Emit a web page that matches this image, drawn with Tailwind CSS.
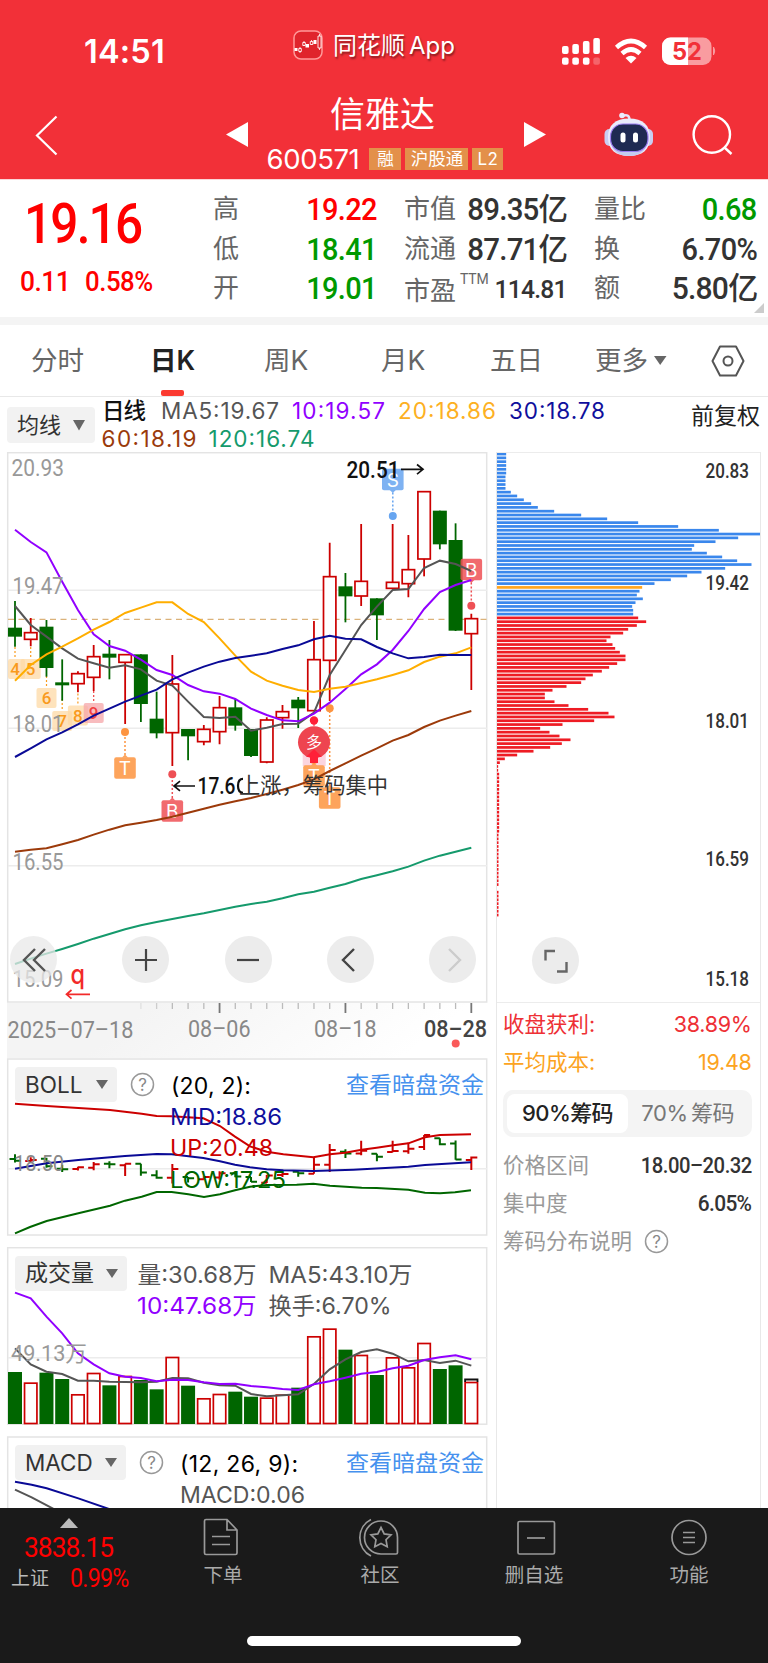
<!DOCTYPE html>
<html lang="zh-CN">
<head>
    <meta charset="UTF-8">
    <meta name="viewport" content="width=device-width, initial-scale=1.0">
    <title>信雅达 600571</title>
    <script src="https://cdn.jsdelivr.net/npm/@tailwindcss/browser@4"></script>
</head>
<body class="w-[768px] h-[1663px] overflow-hidden bg-white text-[#333] font-[Inter,'Noto_Sans_CJK_SC',sans-serif] flex flex-col">

    <!-- Header -->
    <header class="h-[179px] shrink-0 bg-[#f23038] text-white flex flex-col">
        <div class="h-[92px] flex">
            <div class="w-[293px] pl-[84px] pt-[31px] text-[32.500px] leading-[41px] font-semibold tracking-[0.2px]">14:51</div>
            <div class="w-[269px] pt-[30px] flex items-start">
                <svg width="30" height="30" viewBox="0 0 30 30">
                    <rect x="1" y="1" width="28" height="28" rx="7" fill="#e0242c" stroke="#f99" stroke-width="1.5"/>
                    <path d="M1.500 18h3v3h-3zM12.500 14h3.500v3.500h-3.500zM20.500 10h3v4h-3z" fill="#fff"/>
                    <path d="M7 17v6M11 11v5M18.500 10v5M26.500 4v16" stroke="#fff" stroke-width=".8"/>
                    <path d="M5.800 18.500h2.500v3H5.800zM9.800 12.500h2.500v3H9.800zM17.300 11.500h2.500v3h-2.500zM25 6h3v12h-3z" fill="#e0242c" stroke="#fff" stroke-width=".9"/>
                </svg>
                <span class="ml-[10px] text-[24px] leading-[31px] whitespace-nowrap [text-shadow:1px_2px_2px_rgba(0,0,0,0.45)]">同花顺<span class="ml-[4px]">App</span></span>
            </div>
            <svg class="mt-[36px]" width="160" height="32" viewBox="562 36 160 32">
                <g fill="#fff">
                    <rect x="562" y="46" width="6.600" height="8" rx="2"/>
                    <rect x="572.300" y="44" width="6.600" height="10" rx="2"/>
                    <rect x="582.900" y="41" width="6.600" height="13" rx="2"/>
                    <rect x="593.300" y="38" width="6.600" height="16" rx="2"/>
                    <rect x="562" y="57.500" width="6.600" height="7.200" rx="2"/>
                    <rect x="572.300" y="57.500" width="6.600" height="7.200" rx="2"/>
                    <rect x="582.900" y="57.500" width="6.600" height="7.200" rx="2"/>
                    <rect x="593.300" y="57.500" width="6.600" height="7.200" rx="2" opacity=".25"/>
                </g>
                <g fill="none" stroke="#fff" stroke-width="4.600">
                    <path d="M616.500 47.500Q631 34.500 645.500 47.500"/>
                    <path d="M622 53.500Q631 45.500 640 53.500"/>
                </g>
                <path d="M625.500 58Q631 53.500 636.500 58L631 63.500z" fill="#fff"/>
                <rect x="662" y="37.500" width="49.500" height="27.500" rx="8.500" fill="#f99ca0"/>
                <path d="M670.500 37.500H688V65H670.500A8.500 8.500 0 0 1 662 56.500V46A8.500 8.500 0 0 1 670.500 37.500z" fill="#fff"/>
                <path d="M713.500 47q2.500 4 0 8z" fill="#f99ca0" stroke="#f99ca0"/>
                <text x="672" y="60" font-size="24" font-weight="700" fill="#f23038" textLength="30" lengthAdjust="spacingAndGlyphs">52</text>
            </svg>
        </div>
        <div class="h-[87px] flex">
            <div class="w-[226px] pl-[35px] pt-[23px]">
                <svg width="24" height="41" viewBox="0 0 24 41"><path d="M21.500 1.500L2 20.500l19.500 19" fill="none" stroke="#fff" stroke-width="2.200"/></svg>
            </div>
            <svg class="mt-[30px]" width="22" height="26"><path d="M22 0v25L0 12.500z" fill="#fff"/></svg>
            <div class="w-[276px] flex flex-col items-center">
                <div class="h-[52px] leading-[45px] text-[35px] -ml-[7px]">信雅达</div>
                <div class="flex items-center gap-[4px] h-[22px] mt-[4px] ml-[-2px]">
                    <span class="text-[27.500px] leading-[22px] tracking-[-0.4px] mr-[6px]">600571</span>
                    <span class="w-[32px] h-[22px] bg-[#e3904a] text-[16.500px] leading-[22px] text-center">融</span>
                    <span class="w-[63px] h-[22px] bg-[#e3904a] text-[17.500px] leading-[22px] text-center">沪股通</span>
                    <span class="w-[31px] h-[22px] bg-[#e3904a] text-[17px] leading-[22px] text-center tracking-[0.5px]">L2</span>
                </div>
            </div>
            <svg class="mt-[30px]" width="23" height="26"><path d="M0 0v25l22-12.500z" fill="#fff"/></svg>
            <svg class="ml-[56px] mt-[19px]" width="52" height="48" viewBox="602 111 52 48">
                <path d="M621 116q8-3 7.500 5" fill="none" stroke="#e6e3f8" stroke-width="2.500"/>
                <circle cx="621" cy="115.500" r="2.800" fill="#eceafc"/>
                <rect x="603.500" y="129" width="10" height="17" rx="5" fill="#c9cdf2"/>
                <rect x="642" y="129" width="10" height="17" rx="5" fill="#c9cdf2"/>
                <path d="M628 118.500c14 0 21 7 21 18.500 0 13-8 19-21 19s-21-6-21-19c0-11.500 7-18.500 21-18.500z" fill="#e9ebfb"/>
                <path d="M611 147c3 6 9 9 17 9s14-3 17-9" fill="#c5cbef"/>
                <rect x="609.500" y="124" width="37.500" height="27.500" rx="12.500" fill="#1f2a52" stroke="#9b7cf0" stroke-width="1.200"/>
                <rect x="619.500" y="132.500" width="5" height="10" rx="2.500" fill="#fff"/>
                <rect x="632" y="132.500" width="5" height="10" rx="2.500" fill="#fff"/>
            </svg>
            <svg class="ml-[35px] mt-[20px]" width="46" height="46" viewBox="690 112 46 46"><g fill="none" stroke="#fff" stroke-width="2.400"><circle cx="711.800" cy="134.500" r="18.200"/><path d="M724 147l7.500 7"/></g></svg>
        </div>
    </header>

    <!-- Quote summary -->
    <section class="h-[138px] shrink-0 relative flex pt-[10px] font-[Roboto,'Noto_Sans_CJK_SC',sans-serif] border-t border-[#fbd5d7]">
        <div class="w-[213px] text-[#ff0000] font-medium">
            <div class="pl-[24px] h-[74px]"><span class="inline-block origin-left scale-x-[0.9] text-[55px] leading-[69px] tracking-[-2px]">19.16</span></div>
            <div class="pl-[20px] flex text-[28px] leading-[35px] tracking-[-0.500px]"><span class="w-[65px] origin-left scale-x-[0.94]">0.11</span><span class="origin-left scale-x-[0.92]">0.58%</span></div>
        </div>
        <div class="flex gap-[27px] text-[26px] leading-[39.500px] text-[#666]">
            <div class="w-[164px]">
                <div class="flex justify-between"><span>高</span><b class="origin-right scale-x-[0.92] text-[31.500px] font-medium tracking-[-0.700px] text-[#ff0000]">19.22</b></div>
                <div class="flex justify-between"><span>低</span><b class="origin-right scale-x-[0.92] text-[31.500px] font-medium tracking-[-0.700px] text-[#009900]">18.41</b></div>
                <div class="flex justify-between"><span>开</span><b class="origin-right scale-x-[0.92] text-[31.500px] font-medium tracking-[-0.700px] text-[#009900]">19.01</b></div>
            </div>
            <div class="w-[163px] whitespace-nowrap">
                <div class="flex justify-between"><span>市值</span><b class="origin-right scale-x-[0.95] text-[31px] font-medium tracking-[-0.800px] text-[#333]">89.35亿</b></div>
                <div class="flex justify-between"><span>流通</span><b class="origin-right scale-x-[0.95] text-[31px] font-medium tracking-[-0.800px] text-[#333]">87.71亿</b></div>
                <div class="flex justify-between"><span class="flex pt-[3px]">市盈<i class="not-italic text-[14px] leading-[14px] ml-[4px] tracking-[-0.200px]">TTM</i></span><b class="origin-right scale-x-[0.93] text-[26.500px] font-medium tracking-[-0.800px] text-[#333]">114.81</b></div>
            </div>
            <div class="w-[163px] whitespace-nowrap">
                <div class="flex justify-between"><span>量比</span><b class="origin-right scale-x-[0.92] text-[31.500px] font-medium tracking-[-0.700px] text-[#009900]">0.68</b></div>
                <div class="flex justify-between"><span>换</span><b class="origin-right scale-x-[0.92] text-[31.500px] font-medium tracking-[-0.700px] text-[#333]">6.70%</b></div>
                <div class="flex justify-between"><span>额</span><b class="origin-right scale-x-[0.97] text-[31px] font-medium tracking-[-0.800px] text-[#333]">5.80亿</b></div>
            </div>
        </div>
        <svg class="absolute right-[4px] bottom-[4px]" width="10" height="10"><path d="M10 0v10H0z" fill="#ccc"/></svg>
    </section>

    <!-- Period tabs -->
    <nav class="h-[79px] shrink-0 border-t-8 border-[#f4f4f4] flex items-center text-[26.500px] text-[#666] relative whitespace-nowrap">
        <span class="w-[120px] pl-[31px]">分时</span>
        <span class="w-[114px] pl-[30px] font-semibold text-[#222]">日K</span>
        <span class="w-[117px] pl-[30px]">周K</span>
        <span class="w-[117px] pl-[30px]">月K</span>
        <span class="w-[117px] pl-[22px]">五日</span>
        <span class="w-[126px] pl-[10px] flex items-center gap-[6px]">更多<svg width="13" height="10"><path d="M0 0h12.500L6.200 9z" fill="#666"/></svg></span>
        <svg width="34" height="32" viewBox="0 0 34 32"><g fill="none" stroke="#555" stroke-width="2"><path d="M9 1.500h16L32.500 16 25 30.500H9L1.500 16z" stroke-linejoin="round"/><circle cx="17" cy="16" r="4.500"/></g></svg>
        <i class="absolute left-[161px] bottom-0 w-[23px] h-[6px] rounded-[2px] bg-[#fb3a30]"></i>
    </nav>

    <!-- Moving averages -->
    <section class="h-[56px] shrink-0 border-t border-[#e8e8e8] flex text-[22px]">
        <div class="ml-[7px] mt-[10px] w-[88px] h-[36px] rounded-[4px] bg-[#f2f2f2] flex items-center justify-between pl-[10px] pr-[10px]">均线<svg width="12" height="11"><path d="M0 0h12L6 10.500z" fill="#666"/></svg></div>
        <svg class="ml-[5px]" width="520" height="55" viewBox="100 397 520 55">
            <g font-size="22.500" lengthAdjust="spacingAndGlyphs">
                <text x="102" y="419" fill="#111" font-weight="500" textLength="44">日线</text>
                <text x="161" y="418.500" fill="#555" textLength="118">MA5:19.67</text>
                <text x="292" y="418.500" fill="#9100ff" textLength="93">10:19.57</text>
                <text x="398" y="418.500" fill="#fdb022" textLength="98">20:18.86</text>
                <text x="509" y="418.500" fill="#0f0f9c" textLength="96">30:18.78</text>
                <text x="101.500" y="446.500" fill="#9a3a0b" textLength="95">60:18.19</text>
                <text x="208.500" y="446.500" fill="#159a6c" textLength="106">120:16.74</text>
            </g>
        </svg>
        <span class="ml-auto mr-[8px] pt-[2px] leading-[34px] text-[23px] text-[#222]">前复权</span>
    </section>

    <!-- Charts -->
    <main class="h-[1056px] shrink-0 flex">
        <div class="w-[496px] relative">
            <svg id="kline" class="block" width="496" height="606" viewBox="0 452 496 606"></svg>

            <div class="absolute top-[484px] left-[10px] w-[466px] flex justify-between">
                <span class="size-[47px] mr-[10px] rounded-full bg-[#e8e8e8]/75 flex items-center justify-center"><svg width="24" height="24" fill="none" stroke="#555" stroke-width="2.400"><path d="M13 1L2 12l11 11M23 1L12 12l11 11"/></svg></span>
                <span class="size-[47px] rounded-full bg-[#ececec] flex items-center justify-center"><svg width="24" height="24" stroke="#444" stroke-width="2.200"><path d="M1 12h22M12 1v22"/></svg></span>
                <span class="size-[47px] rounded-full bg-[#ececec] flex items-center justify-center"><svg width="24" height="24" stroke="#444" stroke-width="2.200"><path d="M1 12h22"/></svg></span>
                <span class="size-[47px] rounded-full bg-[#ececec] flex items-center justify-center"><svg width="24" height="24" fill="none" stroke="#444" stroke-width="2.400"><path d="M16 1L5 12l11 11"/></svg></span>
                <span class="size-[47px] rounded-full bg-[#ececec] flex items-center justify-center"><svg width="24" height="24" fill="none" stroke="#ccc" stroke-width="2.400"><path d="M8 1l11 11L8 23"/></svg></span>
            </div>

            <div class="relative h-[178px]">
                <svg id="boll" class="absolute inset-0" width="496" height="178" viewBox="0 1058 496 178"></svg>
                <div class="relative flex items-center pl-[15px] pt-[8.500px]">
                    <div class="w-[102px] h-[35px] rounded-[4px] bg-[#f1f1f1] flex items-center justify-between pl-[10px] pr-[9px] text-[22.500px]">BOLL<svg width="12" height="9"><path d="M0 0h12L6 9z" fill="#666"/></svg></div>
                    <svg class="ml-[13px]" width="25" height="25" viewBox="0 0 25 25"><circle cx="12.500" cy="12.500" r="11" fill="none" stroke="#999" stroke-width="1.500"/><text x="12.500" y="18.500" font-size="17" fill="#888" text-anchor="middle">?</text></svg>
                    <span class="ml-[16px] pt-[2px] text-[23px] tracking-[0.200px] text-black whitespace-nowrap">(20, 2):</span>
                    <span class="absolute right-[12px] pt-[1px] text-[23px] text-[#4691ee]">查看暗盘资金</span>
                </div>
            </div>

            <div class="relative h-[178px] mt-[11px]">
                <svg id="volume" class="absolute inset-0" width="496" height="178" viewBox="0 1247 496 178"></svg>
                <div class="relative flex items-center pl-[15px] pt-[8.500px]">
                    <div class="w-[112px] h-[35px] rounded-[4px] bg-[#f1f1f1] flex items-center justify-between pl-[10px] pr-[9px] text-[23px]">成交量<svg width="12" height="9"><path d="M0 0h12L6 9z" fill="#666"/></svg></div>
                </div>
            </div>

            <div class="relative h-[72px] mt-[11px]">
                <svg id="macd" class="absolute inset-0" width="496" height="72" viewBox="0 1436 496 72"></svg>
                <div class="relative flex items-center pl-[15px] pt-[8.500px]">
                    <div class="w-[111px] h-[35px] rounded-[4px] bg-[#f1f1f1] flex items-center justify-between pl-[10px] pr-[9px] text-[22.500px]">MACD<svg width="12" height="9"><path d="M0 0h12L6 9z" fill="#666"/></svg></div>
                    <svg class="ml-[13px]" width="25" height="25" viewBox="0 0 25 25"><circle cx="12.500" cy="12.500" r="11" fill="none" stroke="#999" stroke-width="1.500"/><text x="12.500" y="18.500" font-size="17" fill="#888" text-anchor="middle">?</text></svg>
                    <span class="ml-[16px] pt-[2px] text-[23px] tracking-[0.300px] text-black whitespace-nowrap">(12, 26, 9):</span>
                    <span class="absolute right-[12px] pt-[1px] text-[23px] text-[#4691ee]">查看暗盘资金</span>
                </div>
            </div>
        </div>

        <!-- Chip distribution -->
        <aside class="w-[264.500px] border-x border-[#e8e8e8]">
            <div class="relative h-[551px] border-y border-[#ececec]">
                <svg id="chips" class="block" width="263" height="549" viewBox="496.500 453 263 549"></svg>
                <span class="absolute left-[35px] top-[484px] size-[47px] rounded-full bg-[#ececec] flex items-center justify-center"><svg width="26" height="26" fill="none" stroke="#666" stroke-width="2.400"><path d="M12 3H2.500v9.500M14 23.500h9.500V14"/></svg></span>
            </div>
            <div class="pl-[6px] pr-[8px] text-[21.500px]">
                <div class="h-[38px] mt-[2px] flex items-center justify-between text-[#ee3035]"><span>收盘获利:</span><span class="tracking-[-0.300px]">38.89%</span></div>
                <div class="h-[38px] flex items-center justify-between text-[#fca321]"><span>平均成本:</span><span class="tracking-[-0.300px]">19.48</span></div>
                <div class="mt-[9px] h-[47px] rounded-[10px] bg-[#f4f4f4] p-[4px] flex text-[22px] whitespace-nowrap">
                    <div class="w-[121px] rounded-[8px] bg-white text-[#222] font-medium flex items-center justify-center tracking-[-0.600px]">90%筹码</div>
                    <div class="flex-1 text-[#777] flex items-center justify-center tracking-[-0.300px]">70%<span class="ml-[3px]">筹码</span></div>
                </div>
                <div class="h-[38px] mt-[9px] flex items-center justify-between text-[#999] whitespace-nowrap"><span>价格区间</span><b class="font-[Roboto] origin-right scale-x-[0.92] font-medium text-[22px] tracking-[-0.500px] text-[#333]">18.00–20.32</b></div>
                <div class="h-[38px] flex items-center justify-between text-[#999]"><span>集中度</span><b class="font-[Roboto] origin-right scale-x-[0.95] font-medium text-[22px] tracking-[-0.700px] text-[#333]">6.05%</b></div>
                <div class="h-[38px] flex items-center text-[#999]"><span>筹码分布说明</span><svg class="ml-[12px]" width="25" height="25" viewBox="0 0 25 25"><circle cx="12.500" cy="12.500" r="11" fill="none" stroke="#999" stroke-width="1.500"/><text x="12.500" y="18.500" font-size="17" fill="#888" text-anchor="middle">?</text></svg></div>
            </div>
        </aside>
    </main>

    <!-- Bottom bar -->
    <footer class="h-[155px] shrink-0 bg-[#1a1a1a] text-[#aaa] relative flex text-[19.500px] leading-[24px]">
        <div class="w-[140px] text-[#ff0000] font-[Roboto,'Noto_Sans_CJK_SC',sans-serif]">
            <svg class="ml-[60px] mt-[10px]" width="18" height="11"><path d="M9 0l9 10H0z" fill="#bbb"/></svg>
            <div class="pl-[24px] mt-[4px]"><span class="inline-block origin-left scale-x-[0.94] text-[28px] leading-[30px] tracking-[-1px]">3838.15</span></div>
            <div class="pl-[11px] flex items-center mt-[2px] leading-[28px]"><span class="text-[19px] text-[#bbb] w-[59px]">上证</span><span class="origin-left scale-x-[0.93] text-[25px] tracking-[-0.800px]">0.99%</span></div>
        </div>
        <div class="w-[166px] flex flex-col items-center">
            <svg class="mt-[9px] mb-[6px] -ml-[4px]" width="42" height="40" viewBox="200 1517 42 40"><g fill="none" stroke="#999" stroke-width="1.700"><path d="M206 1519.500h21l10 10.500v23q0 1.500-1.500 1.500h-29.500q-1.500 0-1.500-1.500v-32q0-1.500 1.500-1.500zM227 1519.500v10.500h10M212 1536.500h18M212 1544.500h18"/></g></svg>
            下单
        </div>
        <div class="w-[148px] flex flex-col items-center">
            <svg class="mt-[9px] mb-[6px] -ml-[3px]" width="42" height="40" viewBox="358 1517 42 40"><g fill="none" stroke="#999" stroke-width="1.700"><path d="M371 1519.500a20.500 20.500 0 0 0 0 36.500M397.500 1537.500v15q0 1.500-1.500 1.500h-15a16.500 16.500 0 1 1 16.500-16.500zM381 1527.500l3.200 6.400 6.800.9-5 4.900 1.200 7-6.200-3.300-6.200 3.300 1.200-7-5-4.900 6.800-.9z"/></g></svg>
            社区
        </div>
        <div class="w-[160px] flex flex-col items-center">
            <svg class="mt-[9px] mb-[6px] ml-[3px]" width="42" height="40" viewBox="515 1517 42 40"><g fill="none" stroke="#999" stroke-width="1.700"><rect x="518" y="1521.500" width="36.500" height="32.500" rx="1.500"/><path d="M527 1538h18"/></g></svg>
            删自选
        </div>
        <div class="w-[150px] flex flex-col items-center">
            <svg class="mt-[9px] mb-[6px]" width="42" height="40" viewBox="668 1517 42 40"><g fill="none" stroke="#999" stroke-width="1.700"><circle cx="689" cy="1537.500" r="17"/><path d="M683 1532.500h12M683 1537.500h12M683 1542.500h12"/></g></svg>
            功能
        </div>
        <i class="absolute left-[247px] top-[128px] w-[274px] h-[10px] rounded-full bg-white"></i>
    </footer>

    <script>
        const RED = '#cc0000', GREEN = '#006600';
        const X = i => 15 + i * 15.735;

        // [up, high, low, body top, body bottom], in thirds of a pixel below y=445
        const candles = [
            [0,468,605,548,575],[1,519,604,563,583],[0,525,695,545,669],[0,643,767,712,721],[1,679,742,686,716],
            [1,600,738,635,697],[0,585,703,626,638],[1,629,837,629,652],[0,628,831,628,777],[0,740,880,821,865],
            [1,630,963,717,863],[0,852,946,852,874],[1,840,901,853,890],[1,753,898,788,860],[0,762,857,787,842],
            [0,852,936,852,933],[1,817,955,825,951],[1,780,851,800,818],[0,756,849,764,790],[1,528,797,644,797],
            [1,293,768,395,646],[0,384,532,424,454],[1,237,483,409,453],[0,460,585,460,511],[1,237,432,412,430],
            [1,270,457,374,416],[1,140,394,140,342],[0,197,313,197,298],[0,235,558,285,557],[1,506,735,521,566]
        ];
        const ma = {
            '#555555': [483,540,575,610,641,655,668,661,673,707,722,770,816,819,815,857,848,837,836,803,690,615,540,485,435,432,369,347,357,378],
            '#9100ff': [254,291,322,410,495,568,603,617,644,675,690,720,739,746,762,791,810,826,829,806,773,732,688,658,615,558,492,441,420,405],
            '#ffae00': [707,660,628,605,580,554,531,504,488,472,472,507,531,580,632,680,707,722,735,741,731,725,714,703,690,676,651,635,625,607],
            '#0a0a96': [936,910,883,862,838,812,791,770,752,734,703,683,665,650,639,632,625,612,601,583,572,581,583,606,625,640,636,629,630,630],
            '#9c3a0a': [1220,1214,1210,1198,1185,1169,1154,1141,1133,1125,1115,1103,1091,1079,1069,1059,1047,1034,1020,1003,978,955,932,910,887,870,846,827,812,798],
            '#159a6c': [1557,1541,1526,1512,1497,1481,1467,1453,1441,1431,1422,1413,1405,1395,1385,1377,1370,1360,1348,1340,1328,1317,1302,1291,1279,1265,1247,1232,1220,1208]
        };
        const vol = [396,-428,398,417,-463,-399,436,-408,420,448,-351,437,-475,-462,455,470,-473,-464,443,-289,-266,329,-345,405,-352,-382,-309,387,376,-426];
        const volMa5 = [325,373,395,402,422,422,425,426,427,425,414,415,428,436,437,462,469,466,463,432,388,358,336,328,341,364,360,369,362,377];
        const volMa10 = [158,175,230,280,340,373,400,410,414,424,419,420,427,432,431,438,442,447,450,433,424,413,401,396,385,377,360,352,346,358];

        const line = (pts, color) => `<polyline points="${pts.map(p => p.join()).join(' ')}" fill="none" stroke="${color}" stroke-width="2"/>`;
        const series = (arr, base, color) => line(arr.map((v, i) => [X(i), base + v / 3]), color);
        const pairs = (arr, base, color) => line(arr.map(p => [p[0] / 3, base + p[1] / 3]), color);
        const hline = (y, x1 = 8, x2 = 487) => `<path d="M${x1} ${y}H${x2}" stroke="#ececec" stroke-width="1.500"/>`;
        const frame = (y, h) => `<rect x="7.700" y="${y}" width="479" height="${h}" fill="#fff" stroke="#e4e4e4" stroke-width="1.500"/>`;
        const text = (s, x, y, w, size, color, extra = '') => `<text x="${x}" y="${y}" textLength="${w}" lengthAdjust="spacingAndGlyphs" font-size="${size}" fill="${color}" ${extra}>${s}</text>`;
        const din = 'font-family="Roboto"';

        function tag(s, x, y, color, dotY) {
            const d = dotY > y ? 1 : -1;
            return `<path d="M${x} ${y + d * 13}V${dotY}" stroke="${color}" stroke-width="1.500" stroke-dasharray="2 2"/>
                <circle cx="${x}" cy="${dotY}" r="4" fill="${color}"/>
                <rect x="${x - 10.800}" y="${y - 10.800}" width="21.600" height="21.600" rx="2" fill="${color}" fill-opacity=".85"/>
                <path d="M${x - 3} ${y + d * 10.500}h6l-3 ${d * 3}z" fill="${color}" fill-opacity=".85"/>
                <text x="${x}" y="${y + 7}" font-size="19" fill="#fff" text-anchor="middle">${s}</text>`;
        }

        function num(n, x, y, color, bg) {
            return `<path d="M${x} ${y - 22}v11" stroke="${color}" stroke-width="1.200" stroke-dasharray="2 2"/>
                <rect x="${Math.max(8, x - 10)}" y="${y - 10}" width="${x < 18 ? 17 : 20}" height="20" rx="2" fill="${bg}" fill-opacity=".75"/>
                <text x="${x}" y="${y + 6}" font-size="17" font-family="Roboto" font-weight="500" fill="${color}" text-anchor="middle">${n}</text>`;
        }

        function drawKline() {
            let s = frame(452.700, 549.300) + hline(590.300) + hline(728.300) + hline(865.700);
            s += '<path d="M8 619.300H487" stroke="#dbb27a" stroke-width="1.200" stroke-dasharray="6 4.500"/>';
            s += num(4, 15, 669, '#f99a1c', '#fdd9a5') + num(5, 30.700, 669, '#f99a1c', '#fdd9a5') + num(6, 46.500, 698, '#f99a1c', '#fdd9a5')
                + num(7, 62.200, 721, '#f99a1c', '#fdd9a5') + num(8, 77.900, 715.500, '#f99a1c', '#fdd9a5') + num(9, 93.700, 713, '#f04040', '#f5a5a8');
            candles.forEach(([up, h, l, t, b], i) => {
                const x = X(i), y = v => 445 + v / 3;
                if (up) {
                    s += `<path d="M${x} ${y(h)}V${y(t)}M${x} ${y(b)}V${y(l)}" stroke="${RED}" stroke-width="1.800"/>
                        <rect x="${x - 6.200}" y="${y(t)}" width="12.400" height="${(b - t) / 3}" fill="#fff" stroke="${RED}" stroke-width="1.700"/>`;
                } else {
                    s += `<path d="M${x} ${y(h)}V${y(l)}" stroke="${GREEN}" stroke-width="1.800"/>
                        <rect x="${x - 7}" y="${y(t)}" width="14" height="${(b - t) / 3}" fill="${GREEN}"/>`;
                }
            });
            s += tag('T', 125, 768, '#fd9440', 732) + tag('B', 172.300, 811, '#ee5055', 774.300);
            s += tag('S', 392.800, 479.500, '#67a5f0', 516) + tag('B', 471.300, 569.500, '#ee5055', 605.700);
            s += tag('T', 329.700, 798, '#fd9440', 708.300);
            s += '<rect x="302.700" y="752" width="23" height="14" fill="#fbd5e0"/>' + tag('T', 314, 776, '#fd9440', 760);
            s += `<path d="M314 720V730" stroke="#ff2038" stroke-dasharray="2 2"/><circle cx="314" cy="720.500" r="4.200" fill="#ff2038"/>
                <circle cx="314" cy="742.300" r="16" fill="#ee4550"/>
                <text x="314" y="748" font-size="16" fill="#fff" text-anchor="middle">多</text>
                <path d="M314 749l8 8h-4v6h-8v-6h-4z" fill="#ff2038"/>`;
            for (const c in ma) s += series(ma[c], 445, c);
            s += text('20.93', 11.500, 475.500, 52.500, 23, '#999', din) + text('19.47', 12.500, 593.500, 51, 23, '#999', din)
                + text('18.01', 12.500, 731.500, 51, 23, '#999', din) + text('16.55', 12.500, 869.500, 51, 23, '#999', din) + text('15.09', 12.500, 987, 51, 23, '#999', din);
            s += text('20.51', 346.500, 477.500, 53, 23, '#111', din + ' font-weight="500"');
            s += '<path d="M401 469.300H422M417 464.500l6 4.800-6 4.800M195 786H175M180 781.200l-6 4.800 6 4.800" fill="none" stroke="#111" stroke-width="1.700"/>';
            s += text('17.6', 197.500, 793.500, 38, 23, '#111', din + ' font-weight="500"');
            s += '<path d="M243 778.800q-5 0-5 7t5 7" fill="none" stroke="#111" stroke-width="2.200"/>';
            s += text('上涨，筹码集中', 239, 793, 149, 21.500, '#333');
            s += text('q', 70.500, 984, 14.500, 27, '#f22a2a', 'font-weight="500"') + '<path d="M90 994.300H67M71.500 990l-5 4.300 5 4.300" fill="none" stroke="#f22a2a" stroke-width="1.700"/>';
            // date axis
            s += `<defs><linearGradient id="fade" x1="0" y1="0" x2="1" y2=".15"><stop offset=".3" stop-color="#f4f4f4"/><stop offset=".95" stop-color="#fff"/></linearGradient></defs>
                <rect x="7" y="1003" width="480" height="55" fill="url(#fade)"/>`;
            for (let i = 8; i < 30; i++) {
                const major = i % 8 == 5;
                s += `<path d="M${X(i)} 1003v${major ? 10 : 6}" stroke="${major ? '#777' : '#bbb'}" stroke-width="${major ? 1.800 : 1.300}" opacity="${Math.min(1, (i - 7) / 3)}"/>`;
            }
            s += text('2025–07–18', 7.500, 1037.500, 126, 23.500, '#888', din) + text('08–06', 188, 1037, 62.500, 23.500, '#888', din)
                + text('08–18', 314, 1037, 62.500, 23.500, '#888', din) + text('08–28', 424, 1037, 63, 23.500, '#444', din + ' font-weight="500"');
            s += '<circle cx="455.700" cy="1043.600" r="4" fill="#fa5a5a"/>';
            document.getElementById('kline').innerHTML = s;
        }

        function drawBoll() {
            let s = frame(1059, 176) + hline(1168.700);
            candles.forEach(([up, h, l, t, b], i) => {
                const x = X(i), y = v => 1050 + (282 + (v - 293) * .177) / 3;
                s += `<path d="M${x} ${y(h)}V${y(l)}M${x - 5.500} ${y(up ? b : t)}H${x}M${x} ${y(up ? t : b)}h6" stroke="${up ? RED : GREEN}" stroke-width="2"/>`;
            });
            s += pairs([[45,161],[140,168],[235,174],[330,180],[425,191],[470,198],[515,199],[610,205],[660,228],[705,260],[750,289],[800,305],[850,313],[940,322],[990,313],[1035,308],[1085,299],[1130,293],[1180,286],[1225,280],[1275,262],[1320,255],[1413,253]], 1050, RED);
            s += pairs([[45,356],[140,340],[235,330],[375,318],[470,312],[515,313],[610,324],[660,334],[705,344],[750,352],[800,358],[850,361],[940,363],[1060,359],[1225,350],[1275,345],[1413,337]], 1050, '#0a0a96');
            s += pairs([[45,550],[90,531],[140,513],[235,490],[330,467],[375,452],[425,440],[470,426],[515,426],[565,433],[612,441],[660,433],[705,421],[750,410],[800,405],[890,404],[940,401],[990,407],[1085,413],[1130,414],[1225,419],[1275,428],[1320,430],[1365,427],[1413,421]], 1050, GREEN);
            s += text('18.50', 14, 1171, 50, 22, '#888', din);
            s += text('MID:18.86', 170, 1125, 112, 23, '#0f0f9c') + text('UP:20.48', 170, 1156.300, 103, 23, RED) + text('LOW:17.25', 170, 1187.500, 116, 23, GREEN);
            document.getElementById('boll').innerHTML = s;
        }

        function drawVolume() {
            let s = frame(1247.700, 176.500) + hline(1357.700);
            vol.forEach((v, i) => {
                const top = 1240 + Math.abs(v) / 3, x = X(i);
                s += v < 0
                    ? `<rect x="${x - 6.200}" y="${top + .500}" width="12.400" height="${1423 - top}" fill="#fff" stroke="${RED}" stroke-width="1.700"/>`
                    : `<rect x="${x - 7}" y="${top}" width="14" height="${1424 - top}" fill="${GREEN}"/>`;
            });
            s += '<path d="M465.100 1382V1379.500H477.500V1382" fill="none" stroke="#111" stroke-width="1.800"/>';
            s += series(volMa5, 1240, '#555555') + series(volMa10, 1240, '#9100ff');
            s += text('49.13万', 11, 1361, 76, 21.500, '#999', 'font-family="Roboto, Noto Sans CJK SC"');
            s += text('量:30.68万', 137.500, 1282.500, 119, 23, '#555') + text('MA5:43.10万', 268.500, 1282.500, 144, 23, '#555');
            s += text('10:47.68万', 137, 1314, 119.500, 23, '#9100ff') + text('换手:6.70%', 268.500, 1314, 123, 23, '#555');
            document.getElementById('volume').innerHTML = s;
        }

        function drawMacd() {
            document.getElementById('macd').innerHTML = frame(1437, 100)
                + pairs([[45,725],[95,734],[140,745],[235,775],[330,808]], 1240, '#0a0a96')
                + pairs([[45,749],[95,772],[165,809]], 1240, '#555555')
                + text('MACD:0.06', 180, 1503, 125, 23, '#555');
        }

        function drawChips() {
            const ends = [47,47,47,47,47,47,45,45,45,45,61,80,100,122,142,191,272,350,443,563,685,809,743,675,611,604,649,695,740,783,704,633,590,541,492,455,447,439,457,435,425,428,428,
                443,467,439,413,398,360,348,366,374,388,405,405,380,356,334,307,285,272,228,186,163,163,192,234,293,354,372,311,216,149,177,207,240,214,179,129,80,43,28,23,23];
            for (let i = 84; i < 122; i++) ends.push(i == 114 ? 18 : i < 100 ? 26 : 24);
            let s = '';
            ends.forEach((e, i) => {
                const color = i == 35 ? '#ffa51f' : i < 43 ? '#3a87ec' : '#ee1c24';
                s += `<rect x="496" y="${454 + i * 3.810 - 1.300}" width="${(e - 18) / 3}" height="2.700" fill="${color}"/>`;
            });
            [['20.83', 478.300], ['19.42', 590.300], ['18.01', 728.300], ['16.59', 866], ['15.18', 986]].forEach(([v, y]) => {
                s += text(v, 705, y, 43.500, 19.500, '#333', din + ' font-weight="500"');
            });
            document.getElementById('chips').innerHTML = s;
        }

        drawKline();
        drawBoll();
        drawVolume();
        drawMacd();
        drawChips();
    </script>
</body>
</html>
